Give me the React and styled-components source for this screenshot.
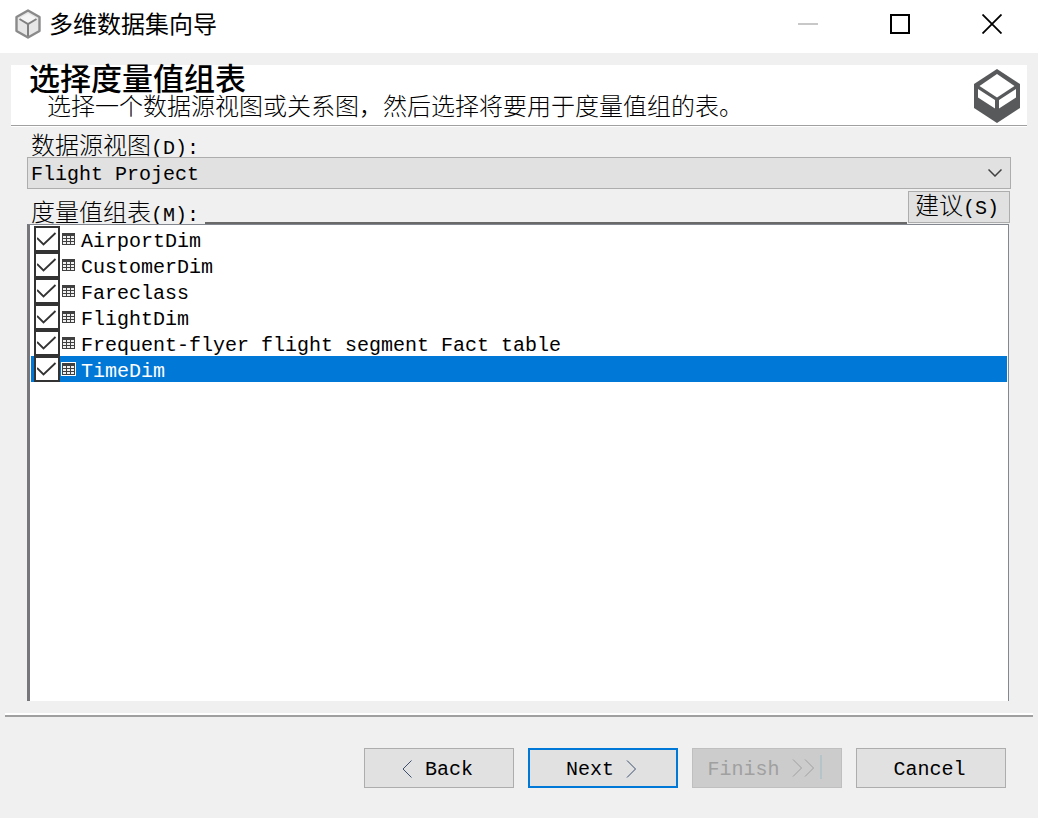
import React, { useState } from "react";
import styled, { createGlobalStyle, css } from "styled-components";

const GlobalStyle = createGlobalStyle`
  *, *::before, *::after { box-sizing: border-box; }
  body {
    margin: 0;
    background: #f0f0f0;
    color: #000;
    font-family: "Liberation Mono", "Noto Sans CJK SC", monospace;
    font-size: 20px;
    line-height: 24px;
  }
  button, select, input { font: inherit; color: inherit; margin: 0; }
`;

const Window = styled.main`
  display: flex;
  flex-direction: column;
  min-height: 100vh;
  background: #f0f0f0;
`;

const Cjk = styled.span`
  font-family: "Noto Sans CJK SC", sans-serif;
  font-size: 24px;
  font-weight: 300;
`;

const TitleBar = styled.header`
  display: flex;
  align-items: center;
  height: 53px;
  padding: 0 12px 5px 14px;
  background: #fff;
`;

const Title = styled.h1`
  flex: 1;
  margin: 0 0 2px 7px;
  font-family: "Noto Sans CJK SC", sans-serif;
  font-size: 24px;
  font-weight: 400;
  line-height: 32px;
`;

const WindowControls = styled.div`
  display: flex;
  gap: 24px;
`;

const WindowButton = styled.button`
  display: grid;
  place-items: center;
  width: 68px;
  height: 40px;
  padding: 0;
  border: 0;
  background: transparent;
  color: ${(p) => (p.disabled ? "#c8c8c8" : "#000")};
`;

const Banner = styled.section`
  display: flex;
  justify-content: space-between;
  height: 61px;
  margin: 12px 11px 0;
  padding: 0 7px 0 18px;
  background: #fff;
  border-bottom: 1px solid #a0a0a0;
  box-shadow: 0 1px 0 #fff;
`;

const Heading = styled.h2`
  margin: 0;
  font-family: "Noto Sans CJK SC", sans-serif;
  font-size: 31px;
  font-weight: 500;
  line-height: 24px;
  white-space: nowrap;
`;

const Description = styled.p`
  margin: 4px 0 0;
  padding-left: 18px;
  font-family: "Noto Sans CJK SC", sans-serif;
  font-size: 24px;
  font-weight: 300;
  line-height: 24px;
  white-space: nowrap;
`;

const LogoSlot = styled.div`
  padding-top: 4px;
`;

const Form = styled.section`
  flex: 1;
  display: flex;
  flex-direction: column;
  padding: 8px 28px 0 27px;
`;

const FieldLabel = styled.label`
  height: 23px;
  padding-left: 4px;
  line-height: 20px;
  white-space: nowrap;
`;

const SelectBox = styled.div`
  position: relative;
  margin-right: -1px;
  svg {
    position: absolute;
    right: 9px;
    top: 12px;
    pointer-events: none;
  }
`;

const Select = styled.select`
  display: block;
  appearance: none;
  width: 100%;
  height: 32px;
  padding: 4px 32px 0 3px;
  border: 1px solid #adadad;
  border-radius: 0;
  background: #e1e1e1;
`;

const ListHeader = styled.div`
  display: flex;
  align-items: flex-end;
  height: 35px;
`;

const ListLabel = styled(FieldLabel).attrs({ as: "h3" })`
  margin: 0;
  font-size: 20px;
  font-weight: 400;
`;

const Rule = styled.div`
  flex: 1;
  height: 2px;
  margin-left: 6px;
  background: #696969;
`;

const buttonFace = css`
  border: 1px solid #adadad;
  border-radius: 0;
  background: #e1e1e1;
`;

const SuggestButton = styled.button`
  ${buttonFace}
  width: 102px;
  height: 32px;
  margin: 0 0 1px 1px;
  padding: 0 4px 2px 0;
  line-height: 24px;
  white-space: nowrap;
`;

const List = styled.ul`
  flex: 1;
  margin: 0 1px 0 0;
  padding: 1px 1px 0 1px;
  list-style: none;
  background: #fff;
  border-top: 1px solid #828790;
  border-left: 3px solid #77777b;
  border-right: 1px solid #828790;
`;

const Row = styled.li`
  background: ${(p) => (p.$selected ? "#0078d7" : "transparent")};
  color: ${(p) => (p.$selected ? "#fff" : "#000")};
`;

const RowLabel = styled.label`
  position: relative;
  display: flex;
  align-items: center;
  height: 26px;
  padding-left: 3px;
  white-space: pre;
`;

const Checkbox = styled.input`
  appearance: none;
  width: 26px;
  height: 26px;
  border: 2px solid #333;
  background: #fff;
  & + svg { visibility: hidden; }
  &:checked + svg { visibility: visible; }
`;

const CheckMark = styled.svg`
  position: absolute;
  left: 6px;
  top: 3px;
  pointer-events: none;
`;

const TableGlyph = styled.svg`
  margin: 0 5px 1px 1px;
`;

const RowText = styled.span`
  padding-top: 5px;
`;

const Footer = styled.footer`
  display: flex;
  justify-content: flex-end;
  gap: 14px;
  margin: 14px 5px 0;
  padding: 31px 27px 30px;
  border-top: 2px solid #a0a0a0;
  box-shadow: 0 -2px 0 #fff;
`;

const WizardButton = styled.button`
  ${buttonFace}
  display: flex;
  align-items: center;
  justify-content: center;
  gap: 12px;
  width: 150px;
  height: 40px;
  padding: 4px 3px 0 0;
  ${(p) => p.$primary && "border: 2px solid #0078d7;"}
  &:disabled {
    background: #ccc;
    border-color: #bfbfbf;
    color: #a0a0a0;
  }
`;

const Arrow = styled.svg`
  margin-bottom: ${(p) => (p.$tall ? "6px" : "3px")};
  color: ${(p) => p.$tone};
`;

function CubeIcon() {
  return (
    <svg width="28" height="30" viewBox="0 0 28 30" aria-hidden="true">
      <path d="M14 1.5 25.5 8v14L14 28.5 2.5 22V8Z" fill="#e6e6e6" stroke="#8a8a8a" strokeWidth="2.4" strokeLinejoin="round" />
      <path d="M14 4.5 23 9.5 14 14.5 5 9.5Z" fill="#f5f5f5" />
      <path d="M5.5 10 14 15l8.5-5M14 15v12" fill="none" stroke="#808080" strokeWidth="2" />
    </svg>
  );
}

function CubeLogo() {
  return (
    <svg width="46" height="54" viewBox="0 0 46 54" aria-hidden="true">
      <path d="M23 0 46 15v24L23 54 0 39V15Z" fill="#58595b" />
      <path d="M23 5 40.5 17 23 28.5 5.5 17Z" fill="#fff" />
      <path d="M4 20 21 31v8.5L4 28.5ZM42 20 25 31v8.5L42 28.5Z" fill="#fff" />
    </svg>
  );
}

function TableIcon({ selected }) {
  return (
    <TableGlyph width="15" height="14" viewBox="0 0 15 14" shapeRendering="crispEdges" aria-hidden="true">
      {selected && <rect width="15" height="14" fill="#fff" />}
      <rect x="1" y="1" width="13" height="12" fill="#404040" />
      <path
        d="M2 4h3v2H2zM6 4h3v2H6zM10 4h3v2h-3zM2 7h3v2H2zM6 7h3v2H6zM10 7h3v2h-3zM2 10h3v2H2zM6 10h3v2H6zM10 10h3v2h-3z"
        fill="#f0f0f0"
      />
    </TableGlyph>
  );
}

const tables = [
  "AirportDim",
  "CustomerDim",
  "Fareclass",
  "FlightDim",
  "Frequent-flyer flight segment Fact table",
  "TimeDim",
];

export default function App() {
  const [selected, setSelected] = useState("TimeDim");
  return (
    <Window>
      <GlobalStyle />
      <TitleBar>
        <CubeIcon />
        <Title>多维数据集向导</Title>
        <WindowControls>
          <WindowButton disabled aria-label="Minimize">
            <svg width="20" height="20" viewBox="0 0 20 20">
              <path d="M0 10h20" stroke="currentColor" strokeWidth="2" />
            </svg>
          </WindowButton>
          <WindowButton aria-label="Maximize">
            <svg width="20" height="20" viewBox="0 0 20 20">
              <path d="M1 1h18v18H1z" fill="none" stroke="currentColor" strokeWidth="2" />
            </svg>
          </WindowButton>
          <WindowButton aria-label="Close">
            <svg width="20" height="20" viewBox="0 0 20 20">
              <path d="m.5.5 19 19m0-19-19 19" stroke="currentColor" strokeWidth="1.8" />
            </svg>
          </WindowButton>
        </WindowControls>
      </TitleBar>

      <Banner>
        <div>
          <Heading>选择度量值组表</Heading>
          <Description>选择一个数据源视图或关系图，然后选择将要用于度量值组的表。</Description>
        </div>
        <LogoSlot>
          <CubeLogo />
        </LogoSlot>
      </Banner>

      <Form>
        <FieldLabel htmlFor="view">
          <Cjk>数据源视图</Cjk>(D):
        </FieldLabel>
        <SelectBox>
          <Select id="view">
            <option>Flight Project</option>
          </Select>
          <svg width="14" height="8" viewBox="0 0 14 8" aria-hidden="true">
            <path d="m.5.5 6.5 6.5L13.5.5" fill="none" stroke="#404040" strokeWidth="1.5" />
          </svg>
        </SelectBox>

        <ListHeader>
          <ListLabel id="tables-label">
            <Cjk>度量值组表</Cjk>(M):
          </ListLabel>
          <Rule />
          <SuggestButton type="button">
            <Cjk>建议</Cjk>(S)
          </SuggestButton>
        </ListHeader>

        <List aria-labelledby="tables-label">
          {tables.map((name) => (
            <Row key={name} $selected={name === selected} onClick={() => setSelected(name)}>
              <RowLabel>
                <Checkbox type="checkbox" defaultChecked />
                <CheckMark width="20" height="20" viewBox="0 0 20 20" aria-hidden="true">
                  <path d="m0 9 6.5 6.5L18.500 4" fill="none" stroke="#333" strokeWidth="1.8" />
                </CheckMark>
                <TableIcon selected={name === selected} />
                <RowText>{name}</RowText>
              </RowLabel>
            </Row>
          ))}
        </List>
      </Form>

      <Footer>
        <WizardButton type="button">
          <Arrow $tone="#3c4f6e" width="11" height="18" viewBox="0 0 11 18" aria-hidden="true">
            <path d="M9.5.5 1 9l8.500 8.500" fill="none" stroke="currentColor" />
          </Arrow>
          Back
        </WizardButton>
        <WizardButton type="button" $primary>
          Next
          <Arrow $tone="#3c4f6e" width="11" height="18" viewBox="0 0 11 18" aria-hidden="true">
            <path d="M1 .5 9.5 9 1 17.500" fill="none" stroke="currentColor" />
          </Arrow>
        </WizardButton>
        <WizardButton type="button" disabled>
          Finish
          <Arrow $tall $tone="#a0a0a0" width="32" height="24" viewBox="0 0 32 24" aria-hidden="true">
            <path d="M1 4.500 9.500 13 1 21.500M13 4.500l8.500 8.500-8.500 8.500" fill="none" stroke="currentColor" />
            <path d="M29 0v24" stroke="#b4c4c8" strokeWidth="2" />
          </Arrow>
        </WizardButton>
        <WizardButton type="button">Cancel</WizardButton>
      </Footer>
    </Window>
  );
}
